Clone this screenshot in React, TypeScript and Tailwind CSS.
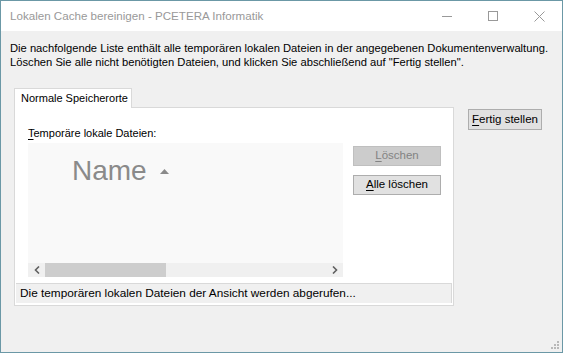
import React from "react";

const font = { fontFamily: '"Segoe UI", "Liberation Sans", Arial, sans-serif' };

function WinButton({ label, underline, disabled, className = "" }: { label: string; underline: string; disabled?: boolean; className?: string }) {
  const rest = label.slice(underline.length);
  return (
    <div
      className={`flex items-center justify-center border text-[11.5px] whitespace-nowrap ${
        disabled ? "bg-[#cccccc] border-[#bfbfbf] text-[#838383]" : "bg-[#e1e1e1] border-[#adadad] text-black"
      } ${className}`}
    >
      <span>
        <span className="underline underline-offset-2">{underline}</span>
        {rest}
      </span>
    </div>
  );
}

export default function App() {
  return (
    <div
      className="relative w-[563px] h-[353px] border border-[#6b98a6] bg-[#f0f0f0] flex flex-col overflow-hidden"
      style={font}
    >
      {/* Title bar */}
      <div className="h-[30px] bg-white flex items-center shrink-0">
        <div className="flex-1 pl-[9px] text-[11.6px] text-[#999999] whitespace-nowrap">
          Lokalen Cache bereinigen - PCETERA Informatik
        </div>
        <div className="w-[46px] h-full flex items-center justify-center">
          <div className="w-[10px] h-px bg-[#999999]" />
        </div>
        <div className="w-[46px] h-full flex items-center justify-center">
          <div className="w-[10px] h-[10px] border border-[#999999]" />
        </div>
        <div className="w-[46px] h-full flex items-center justify-center">
          <svg width="11" height="11" viewBox="0 0 11 11">
            <path d="M0.5 0.5 L10.5 10.5 M10.5 0.5 L0.5 10.5" stroke="#999999" strokeWidth="1" />
          </svg>
        </div>
      </div>

      {/* Body */}
      <div className="flex-1 px-[9px] pt-[10px]">
        <p className="text-[11.2px] leading-[14px] text-black whitespace-nowrap">
          Die nachfolgende Liste enthält alle temporären lokalen Dateien in der angegebenen Dokumentenverwaltung.
          <br />
          Löschen Sie alle nicht benötigten Dateien, und klicken Sie abschließend auf "Fertig stellen".
        </p>

        <div className="flex mt-[19px] ml-[4px]">
          {/* Tab control */}
          <div className="w-[440px] flex flex-col">
            <div className="flex">
              <div className="h-[20px] w-[118px] border border-b-0 border-[#d9d9d9] bg-white flex items-center pl-[6px] text-[11px] text-black whitespace-nowrap relative z-10 -mb-px">
                Normale Speicherorte
              </div>
            </div>
            <div className="h-[199px] border border-[#d9d9d9] bg-white flex flex-col">
              <div className="pl-[13px] pt-[18px] text-[11px] leading-[14px] text-black whitespace-nowrap">
                <span className="underline underline-offset-2">T</span>emporäre lokale Dateien:
              </div>
              <div className="flex pl-[13px] mt-[3px]">
                <div className="w-[315px] h-[134px] flex flex-col bg-[#f9f9f9]">
                  <div className="flex-1 flex items-start pl-[44px] pt-[11px]">
                    <span className="text-[28px] leading-[34px] text-[#8a8a8a]">Name</span>
                    <svg width="9" height="5" viewBox="0 0 9 5" className="ml-[13px] mt-[15px]">
                      <path d="M0 5 L4.5 0 L9 5 Z" fill="#8a8a8a" />
                    </svg>
                  </div>
                  <div className="h-[14px] bg-[#f0f0f0] flex items-center">
                    <div className="w-[17px] h-full flex items-center justify-center">
                      <svg width="6" height="8" viewBox="0 0 6 8">
                        <path d="M5 0.5 L1.5 4 L5 7.5" stroke="#606060" strokeWidth="1.6" fill="none" />
                      </svg>
                    </div>
                    <div className="w-[121px] h-full bg-[#cdcdcd]" />
                    <div className="flex-1" />
                    <div className="w-[17px] h-full flex items-center justify-center">
                      <svg width="6" height="8" viewBox="0 0 6 8">
                        <path d="M1 0.5 L4.5 4 L1 7.5" stroke="#606060" strokeWidth="1.6" fill="none" />
                      </svg>
                    </div>
                  </div>
                </div>
                <div className="ml-[10px] pt-[3px] flex flex-col gap-[9px]">
                  <WinButton label="Löschen" underline="L" disabled className="w-[88px] h-[20px]" />
                  <WinButton label="Alle löschen" underline="A" className="w-[88px] h-[20px]" />
                </div>
              </div>
              <div className="mt-[6px] mx-px h-[20px] bg-[#f0f0f0] border-t border-r border-[#d9d9d9] flex items-center pl-[4px] text-[11.8px] text-black whitespace-nowrap">
                Die temporären lokalen Dateien der Ansicht werden abgerufen...
              </div>
            </div>
          </div>

          <div className="ml-[14px] mt-[21px]">
            <WinButton label="Fertig stellen" underline="F" className="w-[74px] h-[21px]" />
          </div>
        </div>
      </div>

      {/* Size grip */}
      <div className="absolute right-[3px] bottom-[3px] grid grid-cols-3 gap-px">
        <div className="w-[2px] h-[2px]" />
        <div className="w-[2px] h-[2px]" />
        <div className="w-[2px] h-[2px] bg-[#b8b8b8]" />
        <div className="w-[2px] h-[2px]" />
        <div className="w-[2px] h-[2px] bg-[#b8b8b8]" />
        <div className="w-[2px] h-[2px] bg-[#b8b8b8]" />
        <div className="w-[2px] h-[2px] bg-[#b8b8b8]" />
        <div className="w-[2px] h-[2px] bg-[#b8b8b8]" />
        <div className="w-[2px] h-[2px] bg-[#b8b8b8]" />
      </div>
    </div>
  );
}
